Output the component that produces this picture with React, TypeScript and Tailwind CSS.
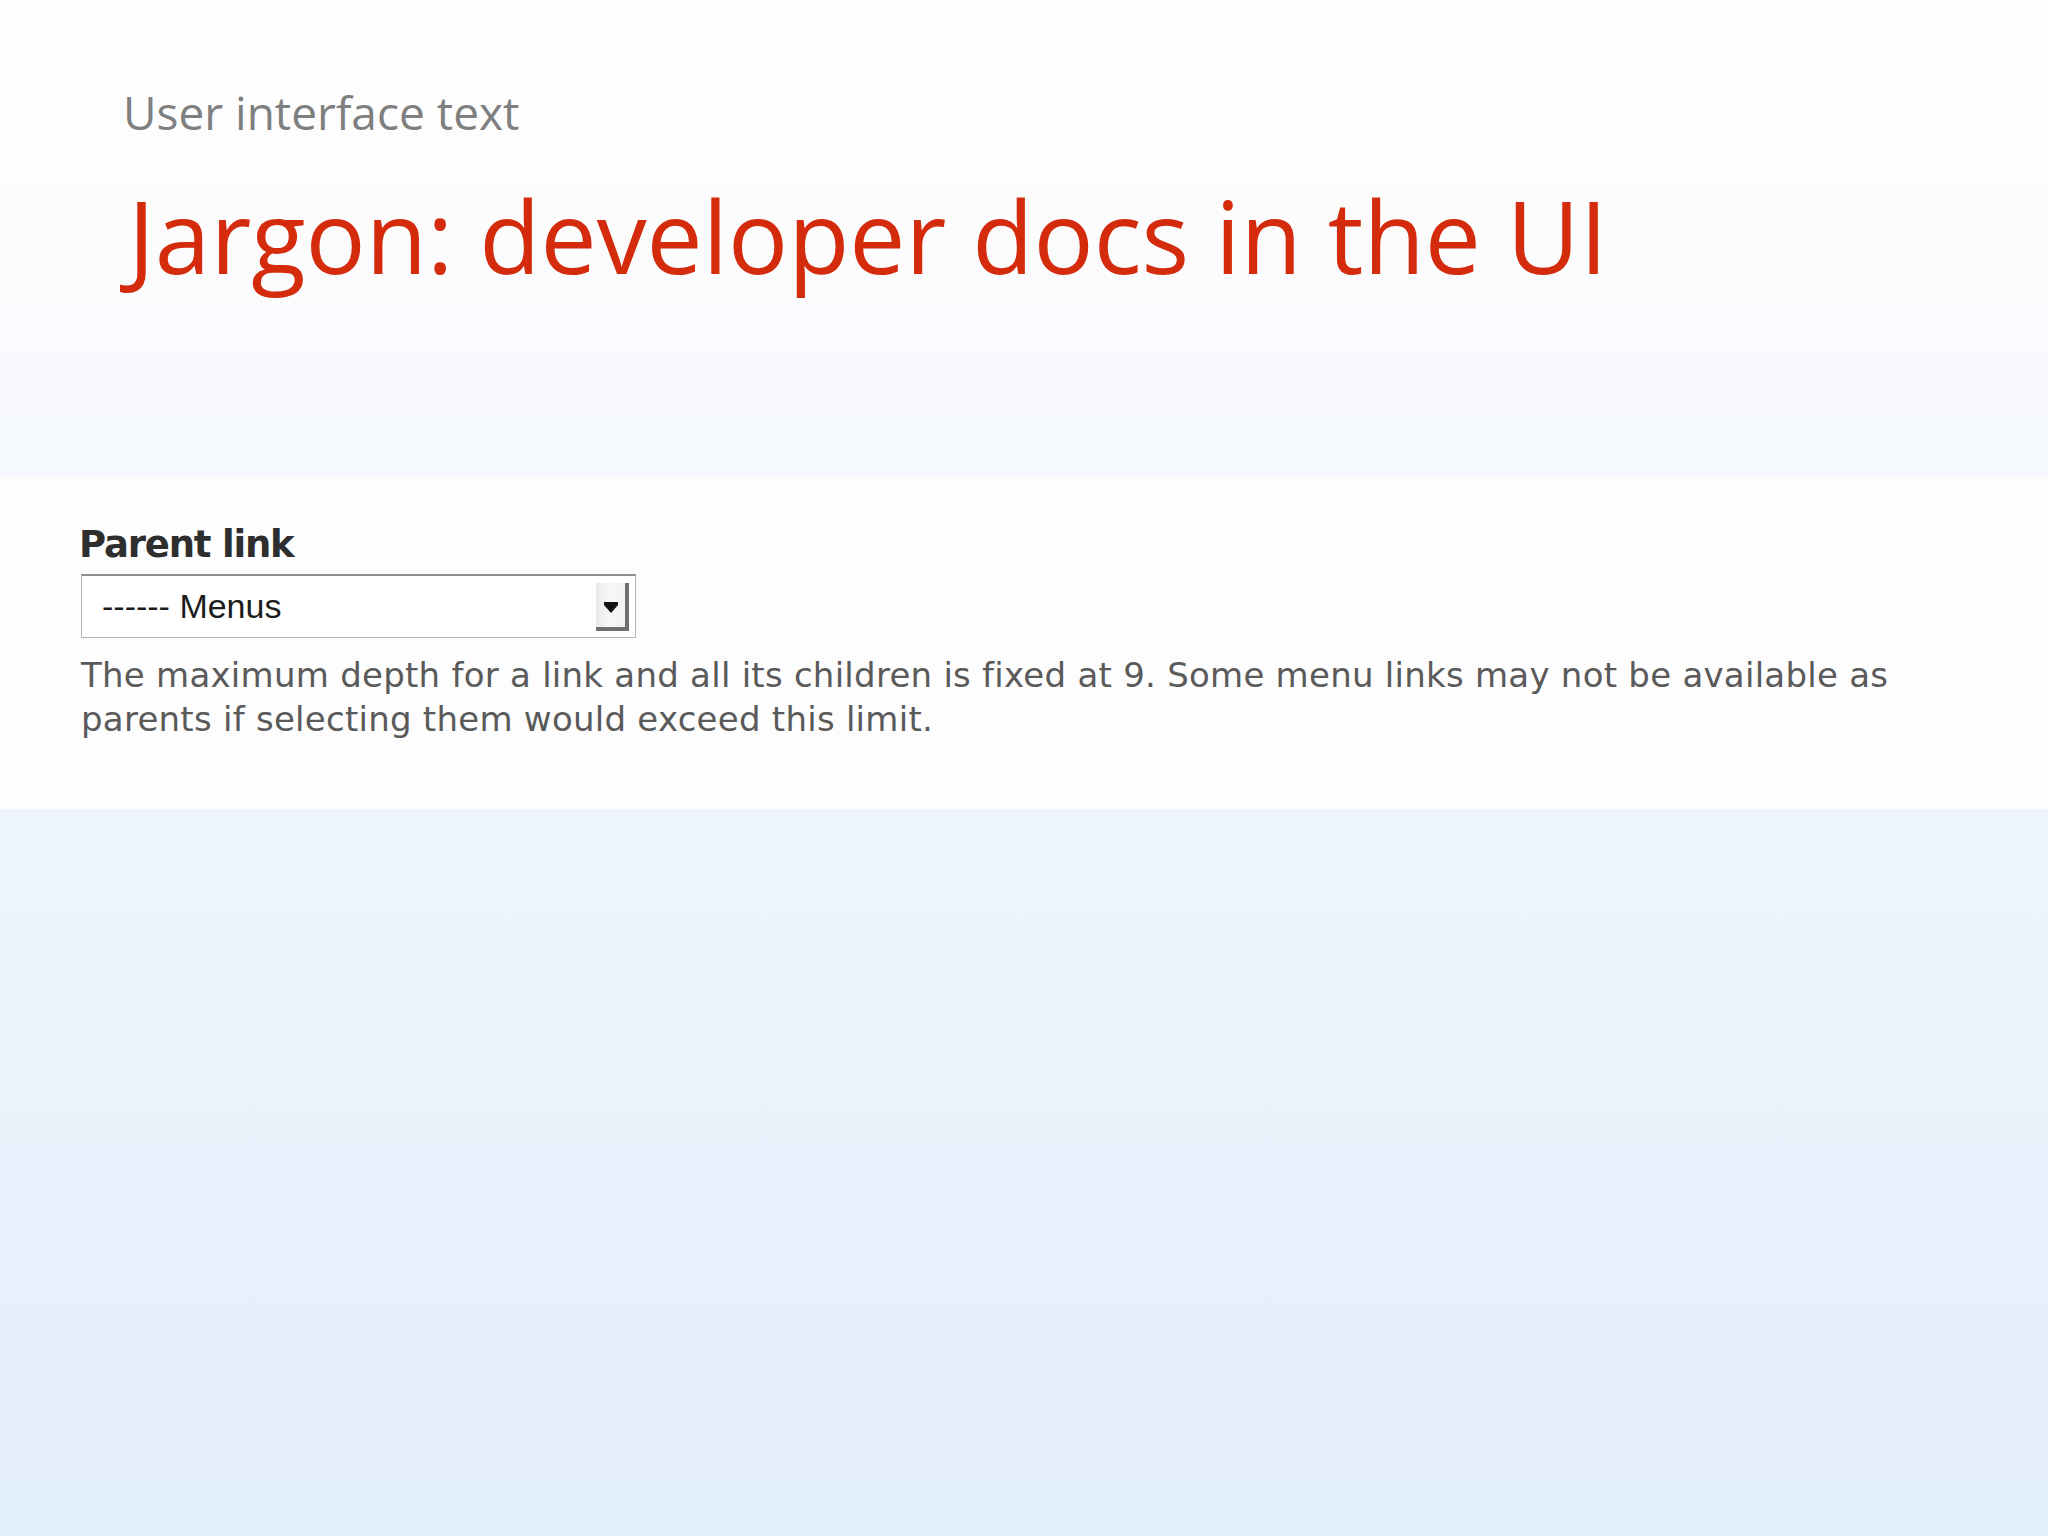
import React from 'react';

function SelectArrow() {
  return (
    <div className="mb-[6px] mr-[6px] flex h-[48px] w-[33px] items-center justify-center border-r-4 border-b-4 border-[#6f6f6f] bg-gradient-to-r from-[#e9e9e9] via-[#f7f7f7] to-[#f2f2f2] pt-[4px]">
      <svg width="14" height="11" viewBox="0 0 14 11">
        <path d="M0 0h14v3l-7 8-7-8z" fill="#111" />
      </svg>
    </div>
  );
}

export default function App() {
  return (
    <div className="flex h-[1536px] w-[2048px] flex-col">
      <header className="h-[477px] bg-gradient-to-b from-[#fefefe] via-[#fcfcfd] to-[#f5f8fe] pt-[89px] pl-[123px] font-['Open_Sans',sans-serif]">
        <p className="text-[46px] leading-none text-[#7f7f7f]">User interface text</p>
        <h1 className="mt-[50px] ml-[5px] text-[100px] leading-none text-[#d42b0d]">Jargon: developer docs in the UI</h1>
      </header>

      <section className="h-[332px] bg-[#fdfdfd] pt-[49px] pl-[81px]">
        <label className="block -ml-[2px] font-['DejaVu_Sans',sans-serif] text-[37px] leading-none font-bold tracking-[-1.2px] text-[#2e2e2e]">
          Parent link
        </label>
        <div className="mt-[11px] flex h-[64px] w-[555px] items-end justify-between border border-t-2 border-[#b5b5b5] border-t-[#8e8e8e] bg-white">
          <span className="mb-[14px] ml-[20px] font-['Liberation_Sans',sans-serif] text-[34px] leading-none text-[#1c1c1c]">
            ------ Menus
          </span>
          <SelectArrow />
        </div>
        <p className="mt-[15px] w-[1870px] font-['DejaVu_Sans',sans-serif] text-[34px] leading-[44px] tracking-[0.25px] text-[#5a5a5a]">
          The maximum depth for a link and all its children is fixed at 9. Some menu links may not be available as parents if selecting them would exceed this limit.
        </p>
      </section>

      <div className="flex-1 bg-gradient-to-b from-[#eff5fd] to-[#e2eefa]" />
    </div>
  );
}
